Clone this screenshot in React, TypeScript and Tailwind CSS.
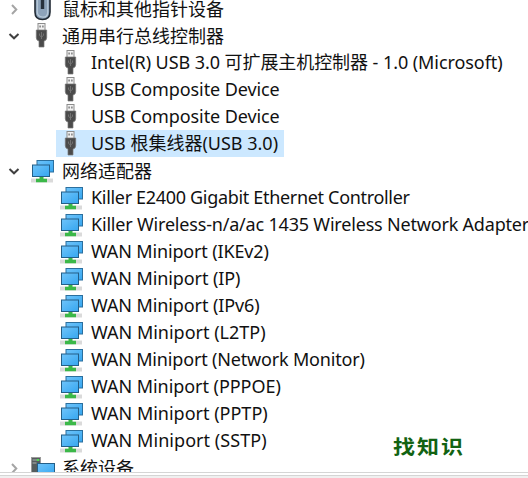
import React from 'react';

type IconName = 'mouse' | 'usb' | 'network' | 'system';

interface Device {
  label: string;
  icon: IconName;
  child?: boolean;
  open?: boolean;
  selected?: boolean;
  tracking?: string;
}

const devices: Device[] = [
  { label: '鼠标和其他指针设备', icon: 'mouse' },
  { label: '通用串行总线控制器', icon: 'usb', open: true },
  { label: 'Intel(R) USB 3.0 可扩展主机控制器 - 1.0 (Microsoft)', icon: 'usb', child: true, tracking: 'tracking-[-0.07px]' },
  { label: 'USB Composite Device', icon: 'usb', child: true, tracking: 'tracking-[-0.1px]' },
  { label: 'USB Composite Device', icon: 'usb', child: true, tracking: 'tracking-[-0.1px]' },
  { label: 'USB 根集线器(USB 3.0)', icon: 'usb', child: true, selected: true },
  { label: '网络适配器', icon: 'network', open: true },
  { label: 'Killer E2400 Gigabit Ethernet Controller', icon: 'network', child: true, tracking: 'tracking-[-0.32px]' },
  { label: 'Killer Wireless-n/a/ac 1435 Wireless Network Adapter', icon: 'network', child: true, tracking: 'tracking-[-0.19px]' },
  { label: 'WAN Miniport (IKEv2)', icon: 'network', child: true, tracking: 'tracking-[-0.15px]' },
  { label: 'WAN Miniport (IP)', icon: 'network', child: true, tracking: 'tracking-[-0.1px]' },
  { label: 'WAN Miniport (IPv6)', icon: 'network', child: true, tracking: 'tracking-[-0.1px]' },
  { label: 'WAN Miniport (L2TP)', icon: 'network', child: true },
  { label: 'WAN Miniport (Network Monitor)', icon: 'network', child: true, tracking: 'tracking-[-0.17px]' },
  { label: 'WAN Miniport (PPPOE)', icon: 'network', child: true, tracking: 'tracking-[-0.05px]' },
  { label: 'WAN Miniport (PPTP)', icon: 'network', child: true },
  { label: 'WAN Miniport (SSTP)', icon: 'network', child: true, tracking: 'tracking-[0.05px]' },
  { label: '系统设备', icon: 'system' },
];

const UsbIcon = () => (
  <svg width="26" height="27" viewBox="0 0 26 27">
    <rect x="9" y="1.5" width="7" height="7" fill="#f2f2f2" stroke="#8c8c8c" />
    <rect x="10.4" y="3.5" width="1.4" height="2" fill="#777" />
    <rect x="13.2" y="3.5" width="1.4" height="2" fill="#777" />
    <path d="M7.3 8h10.4v7.5q0 3-2.7 3.5v6h-5v-6q-2.7-.5-2.7-3.5z" fill="#4b4b4b" stroke="#777" strokeWidth=".7" />
    <path d="M12.5 10v7M10.5 11.5v2l2 1.5 2-1.5v-2" fill="none" stroke="#777" strokeWidth=".9" />
  </svg>
);

const NetworkIcon = () => (
  <svg width="26" height="27" viewBox="0 0 26 27">
    <defs>
      <linearGradient id="screen" x1="0" y1="0" x2="1" y2="1">
        <stop offset="0" stopColor="#6fc4fa" />
        <stop offset="1" stopColor="#35a6f0" />
      </linearGradient>
    </defs>
    <rect x="8" y="3.5" width="16.5" height="11.5" fill="url(#screen)" stroke="#2b6f9e" />
    <path d="M2 21.5h22v4H2z" fill="#dadada" />
    <path d="M10.5 19.5h4v2.3h3.5v3.5H7v-3.5h3.5z" fill="#3bb848" />
    <rect x="3.5" y="8" width="17" height="11.5" fill="url(#screen)" stroke="#245f88" />
  </svg>
);

const MouseIcon = () => (
  <svg width="26" height="27" viewBox="0 0 26 27">
    <path d="M6 0h15v17q0 7.5-7.5 7.5T6 17z" fill="#8da3ba" stroke="#222b35" strokeWidth="1.6" />
    <path d="M8.3 3v14q0 4.5 5.2 5t5.2-5V3" fill="none" stroke="#b9cad9" strokeWidth="1.2" />
    <path d="M13.5 0v14" stroke="#28323d" strokeWidth="3.4" />
  </svg>
);

const SystemIcon = () => (
  <svg width="26" height="27" viewBox="0 0 26 27">
    <rect x="2.5" y="3.5" width="9" height="20" fill="#555d5d" stroke="#9a9a9a" />
    <path d="M3.5 6h7M3.5 9h4" stroke="#aeb4b4" />
    <rect x="8" y="5" width="2" height="2" fill="#4ee04e" />
    <rect x="8.5" y="9.5" width="17" height="12" fill="url(#screen)" stroke="#245f88" />
  </svg>
);

const icons: Record<IconName, React.FC> = {
  mouse: MouseIcon,
  usb: UsbIcon,
  network: NetworkIcon,
  system: SystemIcon,
};

const Chevron = ({ open }: { open?: boolean }) => (
  <svg width="12" height="12" viewBox="0 0 12 12" fill="none" strokeWidth="2">
    {open ? <path d="M1.5 4l4.5 4.3L10.5 4" stroke="#404040" /> : <path d="M4 2l4.3 4.5L4 11" stroke="#a5a5a5" />}
  </svg>
);

const DeviceRow: React.FC<{ device: Device }> = ({ device }) => {
  const Icon = icons[device.icon];

  return (
    <div className={`flex h-[27px] shrink-0 ${device.child ? 'pl-14' : 'pl-2'}`}>
      {!device.child && (
        <div className="flex w-5 shrink-0 items-center pt-px">
          <Chevron open={device.open} />
        </div>
      )}
      <div className={`flex shrink-0 items-center whitespace-nowrap ${device.selected ? 'bg-[#cce8ff] pr-1.5' : ''}`}>
        <div className={device.child ? 'w-[35px] pl-[2px]' : 'w-[34px] pl-[1px]'}>
          <Icon />
        </div>
        <span className={`${device.child ? '' : 'pt-0.5'} ${device.tracking ?? ''}`}>{device.label}</span>
      </div>
    </div>
  );
};

export default function App() {
  return (
    <div className="relative flex h-[478px] w-[528px] flex-col overflow-hidden bg-white font-['Noto_Sans','Noto_Sans_CJK_SC',sans-serif] text-[18px] leading-[27px] text-[#111]">
      <div className="h-[472px] shrink-0 overflow-hidden">
        <div className="-mt-[5px] flex flex-col">
          {devices.map((device, i) => (
            <DeviceRow key={i} device={device} />
          ))}
        </div>
      </div>
      <div className="h-1 shrink-0 border-y border-[#d5d5d5] bg-white" />
      <div className="grow bg-[#f0f0f0]" />
      {/* Watermark */}
      <div className="absolute left-[393px] top-[432px] scale-y-90 font-['Noto_Sans_CJK_SC',sans-serif] text-[22px] font-bold tracking-[2px] text-[#126312]">
        找知识
      </div>
    </div>
  );
}
